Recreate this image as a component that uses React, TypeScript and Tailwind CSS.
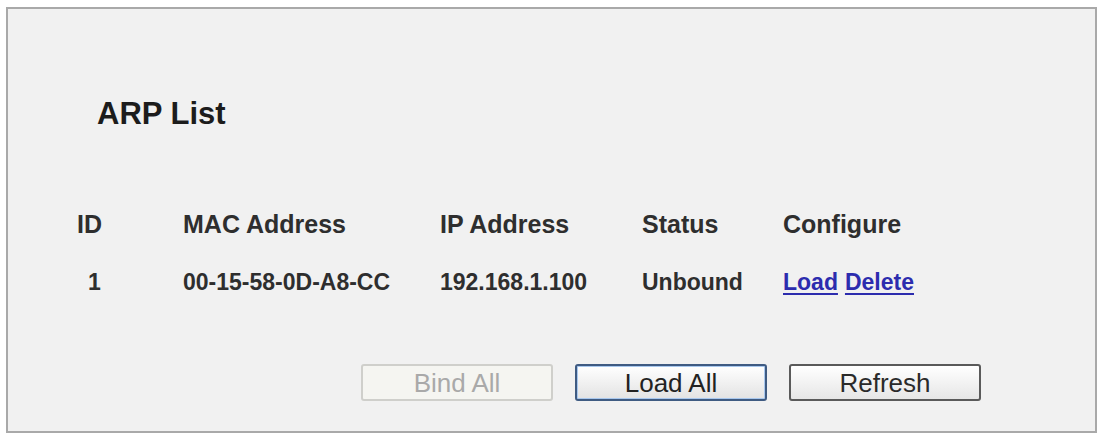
import React from "react";

type ArpEntry = {
  id: number;
  mac: string;
  ip: string;
  status: string;
};

const entries: ArpEntry[] = [
  { id: 1, mac: "00-15-58-0D-A8-CC", ip: "192.168.1.100", status: "Unbound" },
];

const columns = ["ID", "MAC Address", "IP Address", "Status", "Configure"];

const App = () => {
  return (
    <div
      className="min-h-screen bg-white pt-[7px] pl-[6px]"
      style={{ fontFamily: '"Liberation Sans", Arial, sans-serif' }}
    >
      <div className="w-[1091px] h-[426px] border-2 border-[#a9a9a9] bg-[#f1f1f1] flex flex-col">
        <h1 className="mt-[87px] ml-[89px] text-[31px] leading-[36px] font-bold text-[#1c1c1c]">
          ARP List
        </h1>

        <div className="mt-[77px] ml-[69px] grid grid-cols-[106px_257px_202px_141px_auto] gap-y-[28px]">
          {columns.map((col) => (
            <div
              key={col}
              className="text-[25px] leading-[30px] font-bold text-[#2e2e2e]"
            >
              {col}
            </div>
          ))}
          {entries.map((entry) => (
            <React.Fragment key={entry.id}>
              <div className="pl-[11px] text-[23px] leading-[30px] font-bold text-[#2e2e2e]">
                {entry.id}
              </div>
              <div className="text-[23px] leading-[30px] font-bold text-[#2e2e2e]">
                {entry.mac}
              </div>
              <div className="text-[23px] leading-[30px] font-bold text-[#2e2e2e]">
                {entry.ip}
              </div>
              <div className="text-[23px] leading-[30px] font-bold text-[#2e2e2e]">
                {entry.status}
              </div>
              <div className="flex gap-[7px] text-[23px] leading-[30px] font-bold text-[#2c2cae]">
                <a href="#" className="underline decoration-2 underline-offset-[3px]">
                  Load
                </a>
                <a href="#" className="underline decoration-2 underline-offset-[3px]">
                  Delete
                </a>
              </div>
            </React.Fragment>
          ))}
        </div>

        <div className="mt-[67px] ml-[353px] flex gap-[22px]">
          <button
            disabled
            className="w-[192px] h-[37px] rounded-[3px] border-2 border-[#cfcfcb] bg-[#f5f5f1] text-[26px] leading-none text-[#a9a9a9]"
          >
            Bind All
          </button>
          <button className="w-[192px] h-[37px] rounded-[3px] border-2 border-[#3f5b82] bg-gradient-to-b from-white to-[#e3e3e3] shadow-[inset_0_0_0_1px_#a9c8ee] text-[26px] leading-none text-[#222]">
            Load All
          </button>
          <button className="w-[192px] h-[37px] rounded-[3px] border-2 border-[#5a5a5a] bg-gradient-to-b from-white to-[#e6e6e6] text-[26px] leading-none text-[#2a2a2a]">
            Refresh
          </button>
        </div>
      </div>
    </div>
  );
};

export default App;
